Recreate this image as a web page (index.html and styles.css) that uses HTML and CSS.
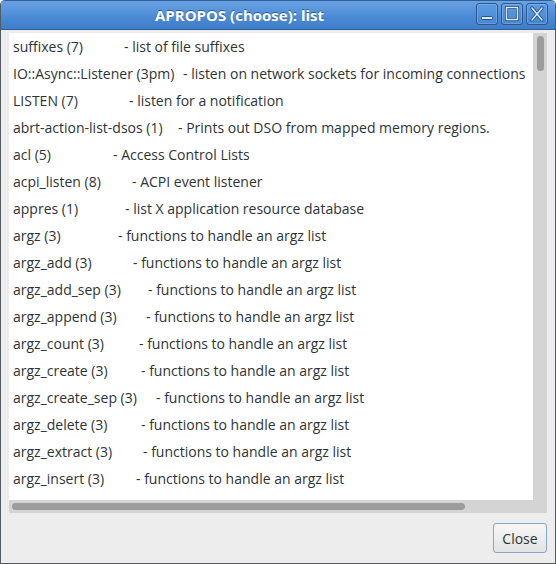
FILE: index.html
```html
<!DOCTYPE html>
<html>
<head>
<meta charset="utf-8">
<link rel="stylesheet" href="styles.css">
</head>
<body>
<div class="window">
  <div class="titlebar">
    <div class="title">APROPOS (choose): list</div>
    <div class="wm-buttons">
      <div class="wm-btn">
        <svg width="22" height="22" viewBox="0 0 22 22"><rect x="5.5" y="13.5" width="11" height="3" rx="1" fill="#dfe9f6" stroke="#23538f"/></svg>
      </div>
      <div class="wm-btn">
        <svg width="22" height="22" viewBox="0 0 22 22"><rect x="5.5" y="4.5" width="11" height="12" fill="none" stroke="#23538f" stroke-width="3"/><rect x="5.5" y="4.5" width="11" height="12" fill="none" stroke="#dfe9f6" stroke-width="1.4"/></svg>
      </div>
      <div class="wm-btn">
        <svg width="22" height="22" viewBox="0 0 22 22"><path d="M6 5 L16 17 M16 5 L6 17" stroke="#23538f" stroke-width="3.4" stroke-linecap="round"/><path d="M6 5 L16 17 M16 5 L6 17" stroke="#dfe9f6" stroke-width="1.5" stroke-linecap="round"/></svg>
      </div>
    </div>
  </div>
  <div class="content">
    <div class="scrolled">
      <div class="viewport">
        <div class="list">
          <div class="row"><span class="name" style="--w:111px">suffixes (7)</span><span class="desc">- list of file suffixes</span></div>
          <div class="row"><span class="name" style="--w:170px">IO::Async::Listener (3pm)</span><span class="desc">- listen on network sockets for incoming connections</span></div>
          <div class="row"><span class="name" style="--w:116px">LISTEN (7)</span><span class="desc">- listen for a notification</span></div>
          <div class="row"><span class="name" style="--w:165px">abrt-action-list-dsos (1)</span><span class="desc">- Prints out DSO from mapped memory regions.</span></div>
          <div class="row"><span class="name" style="--w:100px">acl (5)</span><span class="desc">- Access Control Lists</span></div>
          <div class="row"><span class="name" style="--w:119px">acpi_listen (8)</span><span class="desc">- ACPI event listener</span></div>
          <div class="row"><span class="name" style="--w:112px">appres (1)</span><span class="desc">- list X application resource database</span></div>
          <div class="row"><span class="name" style="--w:105px">argz (3)</span><span class="desc">- functions to handle an argz list</span></div>
          <div class="row"><span class="name" style="--w:120px">argz_add (3)</span><span class="desc">- functions to handle an argz list</span></div>
          <div class="row"><span class="name" style="--w:135px">argz_add_sep (3)</span><span class="desc">- functions to handle an argz list</span></div>
          <div class="row"><span class="name" style="--w:133px">argz_append (3)</span><span class="desc">- functions to handle an argz list</span></div>
          <div class="row"><span class="name" style="--w:126px">argz_count (3)</span><span class="desc">- functions to handle an argz list</span></div>
          <div class="row"><span class="name" style="--w:128px">argz_create (3)</span><span class="desc">- functions to handle an argz list</span></div>
          <div class="row"><span class="name" style="--w:143px">argz_create_sep (3)</span><span class="desc">- functions to handle an argz list</span></div>
          <div class="row"><span class="name" style="--w:128px">argz_delete (3)</span><span class="desc">- functions to handle an argz list</span></div>
          <div class="row"><span class="name" style="--w:130px">argz_extract (3)</span><span class="desc">- functions to handle an argz list</span></div>
          <div class="row"><span class="name" style="--w:123px">argz_insert (3)</span><span class="desc">- functions to handle an argz list</span></div>
        </div>
      </div>
      <div class="vscroll"><div class="vthumb"></div></div>
      <div class="hscroll"><div class="hthumb"></div></div>
      <div class="corner"></div>
    </div>
    <div class="actions">
      <button class="btn">Close</button>
    </div>
  </div>
</div>
</body>
</html>
```

FILE: styles.css
```css
html, body {
  margin: 0;
  padding: 0;
  background: #ffffff;
}
body {
  width: 556px;
  height: 564px;
  overflow: hidden;
  font-family: "Open Sans", "DejaVu Sans", sans-serif;
  color: #2e3436;
}
.window {
  width: 556px;
  height: 564px;
  box-sizing: border-box;
  display: flex;
  flex-direction: column;
  border-radius: 5px 5px 0 0;
  overflow: hidden;
  background: #ededed;
  border: 1px solid #555a60;
  border-top: none;
}
.titlebar {
  height: 30px;
  flex: none;
  display: flex;
  align-items: flex-start;
  background: linear-gradient(#6aa3e3, #4a89d4 60%, #3f7dc8);
  border-top: 1px solid #2f5f99;
  box-sizing: border-box;
  border-bottom: 1px solid #2f5f99;
  margin: 0 -1px;
  border-radius: 5px 5px 0 0;
}
.title {
  flex: 1;
  text-align: center;
  color: #ffffff;
  font-weight: 700;
  font-size: 15px;
  line-height: 28px;
  text-shadow: 0 -1px 0 #2d5c96;
  padding-left: 3px;
}
.wm-buttons {
  display: flex;
  gap: 3px;
  padding-top: 2px;
  padding-right: 8px;
}
.wm-btn {
  width: 22px;
  height: 22px;
  box-sizing: border-box;
  border: 1px solid #27578f;
  border-radius: 3px;
  background: linear-gradient(#5d9be0, #4887d2);
  box-shadow: inset 0 0 0 1px rgba(255,255,255,0.18);
  position: relative;
}
.wm-btn svg {
  position: absolute;
  left: -1px;
  top: -1px;
}
.content {
  flex: 1;
  display: flex;
  flex-direction: column;
  padding: 3px 8px 10px 8px;
}
.scrolled {
  height: 480px;
  flex: none;
  display: grid;
  grid-template-columns: 1fr 14px;
  grid-template-rows: 1fr 13px;
  background: #d4d4d4;
}
.viewport {
  background: #ffffff;
  overflow: hidden;
}
.list {
  padding: 0 0 0 4px;
  white-space: nowrap;
}
.row {
  display: flex;
  height: 27px;
  align-items: center;
  font-size: 14px;
}
.name {
  flex: none;
  min-width: var(--w);
  padding-right: 4px;
  box-sizing: border-box;
}
.vscroll {
  padding: 3px 0 0 4px;
}
.vthumb {
  width: 7px;
  height: 35px;
  border-radius: 4px;
  background: #9c9c9c;
}
.hscroll {
  padding: 3px 0 0 3px;
}
.hthumb {
  width: 453px;
  height: 7px;
  border-radius: 4px;
  background: #9c9c9c;
}
.corner {
  background: #d4d4d4;
}
.actions {
  display: flex;
  justify-content: flex-end;
  padding-top: 10px;
}
.btn {
  width: 54px;
  height: 30px;
  box-sizing: border-box;
  border: 1px solid #87a7d0;
  border-radius: 3px;
  background: linear-gradient(#f7f7f7, #e3e3e3);
  font-family: "Open Sans", "DejaVu Sans", sans-serif;
  font-size: 14px;
  color: #2e3436;
  padding: 0;
}
```
